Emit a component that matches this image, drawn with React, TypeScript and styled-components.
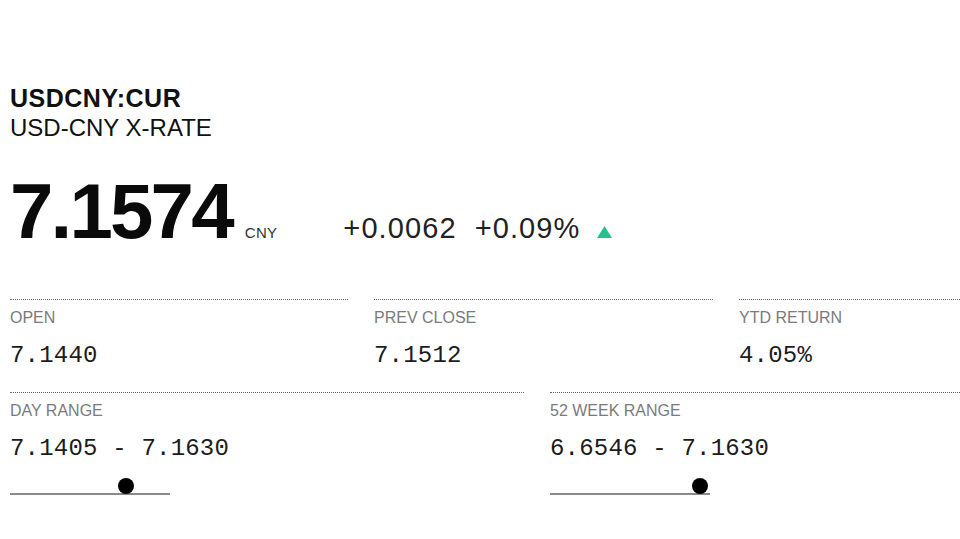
import styled, { createGlobalStyle } from 'styled-components';

const GlobalStyle = createGlobalStyle`
  html, body {
    margin: 0;
    padding: 0;
    background: #fff;
    overflow: hidden;
  }
  body {
    font-family: "Liberation Sans", Arial, sans-serif;
    color: #111;
  }
`;

const Page = styled.div`
  width: 950px;
  padding: 84px 0 0 10px;
`;

const Ticker = styled.h1`
  margin: 0;
  font-size: 25px;
  line-height: 29px;
  font-weight: 700;
  letter-spacing: 0.5px;
  color: #111;
`;

const Name = styled.h2`
  margin: 0;
  font-size: 24px;
  line-height: 29px;
  font-weight: 400;
  color: #111;
`;

const PriceRow = styled.div`
  display: flex;
  align-items: baseline;
  margin-top: 30px;
`;

const Price = styled.span`
  font-size: 78px;
  line-height: 78px;
  font-weight: 700;
  letter-spacing: -2.8px;
  color: #0a0a0a;
`;

const Currency = styled.span`
  margin-left: 13px;
  font-size: 15px;
  letter-spacing: 0.3px;
  color: #333;
`;

const Change = styled.span<{ $first?: boolean }>`
  margin-left: ${({ $first }) => ($first ? '66px' : '18px')};
  font-size: 29px;
  letter-spacing: 1.1px;
  color: #222;
`;

const Arrow = styled.svg`
  margin-left: 17px;
  width: 15px;
  height: 12px;
`;

const Grid = styled.div<{ $cols: string; $first?: boolean }>`
  display: grid;
  grid-template-columns: ${({ $cols }) => $cols};
  column-gap: 26px;
  margin-top: ${({ $first }) => ($first ? '49px' : '22px')};
`;

const Cell = styled.div`
  border-top: 1px dotted #666;
  padding-top: 8px;
`;

const Label = styled.div`
  font-size: 16px;
  line-height: 20px;
  color: #7b7b7b;
`;

const Value = styled.div`
  margin-top: 14px;
  font-family: "Liberation Mono", "Courier New", monospace;
  font-size: 24px;
  line-height: 28px;
  letter-spacing: 0.2px;
  color: #1c1c1c;
`;

const Slider = styled.div`
  position: relative;
  width: 160px;
  height: 17px;
  margin-top: 15px;
  border-bottom: 2px solid #8a8a8a;
  box-sizing: border-box;
`;

const Knob = styled.span`
  position: absolute;
  top: 0;
  width: 16px;
  height: 16px;
  border-radius: 50%;
  background: #000;
`;

const price = 7.1574;

const RangeSlider = ({ low, high }: { low: number; high: number }) => {
  const pct = Math.min(1, Math.max(0, (price - low) / (high - low)));
  return (
    <Slider>
      <Knob style={{ left: `${pct * 144}px` }} />
    </Slider>
  );
};

const App = () => (
  <>
    <GlobalStyle />
    <Page>
      <Ticker>USDCNY:CUR</Ticker>
      <Name>USD-CNY X-RATE</Name>

      <PriceRow>
        <Price>7.1574</Price>
        <Currency>CNY</Currency>
        <Change $first>+0.0062</Change>
        <Change>+0.09%</Change>
        <Arrow viewBox="0 0 15 12">
          <polygon points="7.5,0 15,12 0,12" fill="#27c08b" />
        </Arrow>
      </PriceRow>

      <Grid $first $cols="338px 339px 1fr">
        <Cell>
          <Label>OPEN</Label>
          <Value>7.1440</Value>
        </Cell>
        <Cell>
          <Label>PREV CLOSE</Label>
          <Value>7.1512</Value>
        </Cell>
        <Cell>
          <Label>YTD RETURN</Label>
          <Value>4.05%</Value>
        </Cell>
      </Grid>

      <Grid $cols="514px 1fr">
        <Cell>
          <Label>DAY RANGE</Label>
          <Value>7.1405 - 7.1630</Value>
          <RangeSlider low={7.1405} high={7.163} />
        </Cell>
        <Cell>
          <Label>52 WEEK RANGE</Label>
          <Value>6.6546 - 7.1630</Value>
          <RangeSlider low={6.6546} high={7.163} />
        </Cell>
      </Grid>
    </Page>
  </>
);

export default App;
